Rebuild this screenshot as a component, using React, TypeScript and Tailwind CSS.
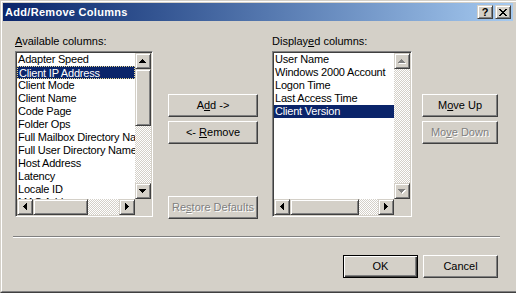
import React from 'react';

const raised =
  'border border-t-[#d4d0c8] border-l-[#d4d0c8] border-r-[#404040] border-b-[#404040] shadow-[inset_1px_1px_#fff,inset_-1px_-1px_#808080] bg-[#d4d0c8]';
const pushBtn =
  'border border-t-white border-l-white border-r-[#404040] border-b-[#404040] shadow-[inset_-1px_-1px_#808080] bg-[#d4d0c8]';
const sunken =
  'border border-t-[#808080] border-l-[#808080] border-r-white border-b-white shadow-[inset_1px_1px_#404040,inset_-1px_-1px_#d4d0c8] bg-white';
const dither = 'bg-[image:repeating-conic-gradient(#fff_0_25%,#d4d0c8_0_50%)] bg-[length:2px_2px]';

type Dir = 'up' | 'down' | 'left' | 'right';

// pixel rows of the little scroll arrow, drawn as rects
function arrowRects(dir: Dir) {
  const rows = [
    [3, 1],
    [2, 3],
    [1, 5],
    [0, 7],
  ];
  return rows.map(([start, len], i) => {
    if (dir === 'up') return { x: start, y: i, w: len, h: 1 };
    if (dir === 'down') return { x: start, y: 3 - i, w: len, h: 1 };
    if (dir === 'left') return { x: i, y: start, w: 1, h: len };
    return { x: 3 - i, y: start, w: 1, h: len };
  });
}

function Arrow({ dir, disabled }: { dir: Dir; disabled?: boolean }) {
  const vert = dir === 'up' || dir === 'down';
  const w = vert ? 8 : 5;
  const h = vert ? 5 : 8;
  const rects = arrowRects(dir);
  return (
    <svg width={w} height={h} viewBox={`0 0 ${w} ${h}`} shapeRendering="crispEdges">
      {disabled &&
        rects.map((r, i) => (
          <rect key={'s' + i} x={r.x + 1} y={r.y + 1} width={r.w} height={r.h} fill="#fff" />
        ))}
      {rects.map((r, i) => (
        <rect key={i} x={r.x} y={r.y} width={r.w} height={r.h} fill={disabled ? '#808080' : '#000'} />
      ))}
    </svg>
  );
}

function ScrollBtn({ dir, disabled }: { dir: Dir; disabled?: boolean }) {
  return (
    <div className={`${raised} w-[16px] h-[16px] shrink-0 flex items-center justify-center`}>
      <Arrow dir={dir} disabled={disabled} />
    </div>
  );
}

function Button({
  children,
  disabled,
  isDefault,
  className = '',
}: {
  children: React.ReactNode;
  disabled?: boolean;
  isDefault?: boolean;
  className?: string;
}) {
  const frame = isDefault
    ? 'border border-black shadow-[inset_1px_1px_#fff,inset_-1px_-1px_#404040,inset_-2px_-2px_#808080] bg-[#d4d0c8]'
    : pushBtn;
  return (
    <div
      className={`${frame} h-[23px] flex items-center justify-center whitespace-pre text-[11px] leading-[13px] ${
        disabled ? 'text-[#808080] [text-shadow:1px_1px_#fff]' : 'text-black'
      } ${className}`}
    >
      {children}
    </div>
  );
}

function ListBox({
  items,
  selected,
  focused,
  width,
  vThumb,
  hThumb,
  contentWidth,
}: {
  items: string[];
  selected: number;
  focused?: boolean;
  width: string;
  vThumb: [number, number] | null;
  hThumb: [number, number];
  contentWidth: string;
}) {
  return (
    <div className={`${sunken} ${width} h-[166px] p-px flex flex-col`}>
      <div className="flex h-[146px]">
        <div className={`${contentWidth} overflow-hidden`}>
          {items.map((item, i) => (
            <div
              key={item}
              className={`h-[13px] leading-[12px] pl-px whitespace-nowrap text-[11px] tracking-[-0.2px] ${
                i === selected ? 'bg-[#0a246a] text-white' : 'text-black'
              } ${i === selected && focused ? 'border border-dotted border-[#e8d890]' : ''}`}
            >
              {item}
            </div>
          ))}
        </div>
        <div className="w-[16px] flex flex-col">
          <ScrollBtn dir="up" disabled={!vThumb} />
          {vThumb ? (
            <>
              <div className={`${dither}`} style={{ height: vThumb[0] }} />
              <div className={`${raised}`} style={{ height: vThumb[1] }} />
              <div className={`${dither} flex-1`} />
            </>
          ) : (
            <div className={`${dither} flex-1`} />
          )}
          <ScrollBtn dir="down" disabled={!vThumb} />
        </div>
      </div>
      <div className="flex h-[16px]">
        <ScrollBtn dir="left" />
        <div className={`${dither}`} style={{ width: hThumb[0] }} />
        <div className={`${raised}`} style={{ width: hThumb[1] }} />
        <div className={`${dither} flex-1`} />
        <ScrollBtn dir="right" />
        <div className="w-[16px] bg-[#d4d0c8]" />
      </div>
    </div>
  );
}

function CloseGlyph() {
  const rows = ['11000011', '01100110', '00111100', '00011000', '00111100', '01100110', '11000011'];
  return (
    <svg width={8} height={7} viewBox="0 0 8 7" shapeRendering="crispEdges">
      {rows.map((row, y) =>
        row.split('').map((c, x) => (c === '1' ? <rect key={`${x}-${y}`} x={x} y={y} width={1} height={1} fill="#000" /> : null))
      )}
    </svg>
  );
}

const available = [
  'Adapter Speed',
  'Client IP Address',
  'Client Mode',
  'Client Name',
  'Code Page',
  'Folder Ops',
  'Full Mailbox Directory Name',
  'Full User Directory Name',
  'Host Address',
  'Latency',
  'Locale ID',
  'MAC Address',
];

const displayed = ['User Name', 'Windows 2000 Account', 'Logon Time', 'Last Access Time', 'Client Version'];

export default function App() {
  return (
    <div className="w-[516px] h-[293px] overflow-hidden bg-[#d4d0c8] border-l border-t border-l-[#d4d0c8] border-t-[#d4d0c8] border-b border-b-[#404040] font-['Liberation_Sans',Arial,sans-serif] select-none">
      <div className="h-full border-l border-t border-l-white border-t-white border-b border-b-[#808080] pl-px pt-px pr-[3px] pb-px flex flex-col">
        {/* title bar */}
        <div className="h-[18px] shrink-0 flex items-center pl-[2px] pr-[2px] bg-linear-to-r from-[#0a246a] to-[#a6caf0]">
          <span className="flex-1 text-white font-bold text-[11px] leading-[13px] tracking-[0.3px]">Add/Remove Columns</span>
          <div className={`${raised} w-[16px] h-[14px] flex items-center justify-center text-[11px] font-bold leading-none text-black`}>
            ?
          </div>
          <div className={`${raised} ml-[2px] w-[16px] h-[14px] flex items-center justify-center`}>
            <CloseGlyph />
          </div>
        </div>

        {/* columns */}
        <div className="flex pt-[14px] pl-[12px]">
          <div className="w-[138px]">
            <div className="h-[13px] text-[11px] leading-[13px] text-black">
              <u>A</u>vailable columns:
            </div>
            <div className="mt-[3px]">
              <ListBox
                items={available}
                selected={1}
                focused
                width="w-[138px]"
                contentWidth="w-[118px]"
                vThumb={[0, 57]}
                hThumb={[0, 55]}
              />
            </div>
          </div>

          <div className="ml-[15px] w-[90px] pt-[59px] flex flex-col">
            <Button>
              A<u>d</u>d -&gt;
            </Button>
            <Button className="mt-[4px]">
              {'<- '}
              <u>R</u>emove
            </Button>
            <Button disabled className="mt-[52px]">
              Re<u>s</u>tore Defaults
            </Button>
          </div>

          <div className="ml-[14px] w-[140px]">
            <div className="h-[13px] text-[11px] leading-[13px] text-black">
              Display<u>e</u>d columns:
            </div>
            <div className="mt-[3px]">
              <ListBox
                items={displayed}
                selected={4}
                width="w-[140px]"
                contentWidth="w-[120px]"
                vThumb={null}
                hThumb={[0, 69]}
              />
            </div>
          </div>

          <div className="ml-[10px] w-[76px] pt-[59px] flex flex-col">
            <Button>
              M<u>o</u>ve Up
            </Button>
            <Button disabled className="mt-[4px]">
              Mo<u>v</u>e Down
            </Button>
          </div>
        </div>

        {/* etched separator */}
        <div className="mt-[17px] ml-[10px] w-[487px]">
          <div className="h-px bg-[#808080]" />
          <div className="h-px bg-white" />
        </div>

        <div className="mt-[17px] pr-[15px] flex justify-end gap-[5px]">
          <Button isDefault className="w-[75px]">
            OK
          </Button>
          <Button className="w-[75px]">Cancel</Button>
        </div>
      </div>
    </div>
  );
}
